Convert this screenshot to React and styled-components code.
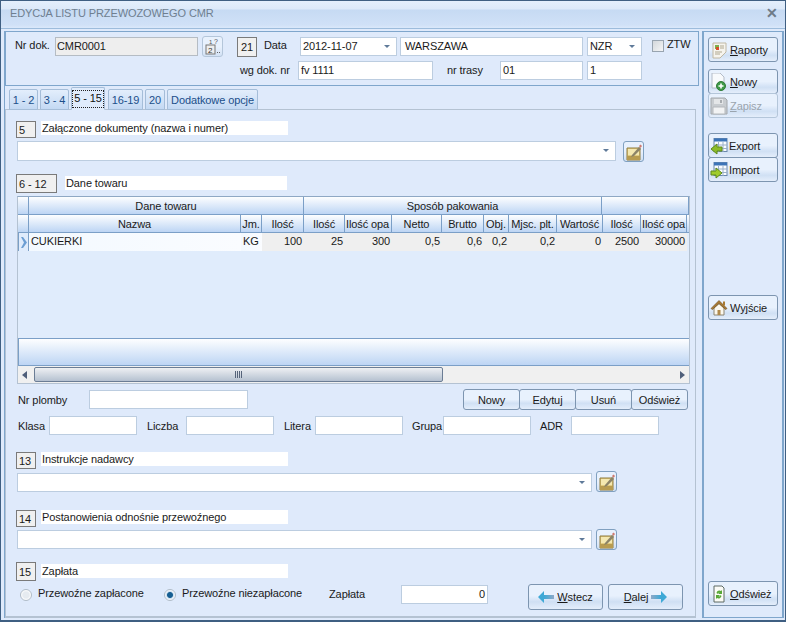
import React from 'react'
import styled, { createGlobalStyle } from 'styled-components'

const GlobalStyle = createGlobalStyle`
html, body {
  margin: 0;
  padding: 0;
  background: #e0ecfc;
}
* {
  box-sizing: border-box;
}
`

const Window = styled.div`
width: 786px;
height: 622px;
display: flex;
flex-direction: column;
overflow: hidden;
background: #dfeafb;
border: 1px solid #3f5f82;
border-bottom-width: 2px;
font-family: "Liberation Sans", Arial, sans-serif;
font-size: 11px;
letter-spacing: -0.1px;
color: #1a1a1a;
`

const TitleBar = styled.div`
height: 28px;
flex: none;
display: flex;
align-items: center;
justify-content: space-between;
padding: 0 7px 3px 9px;
background: linear-gradient(#e4effc 0, #dce9f9 8px, #c6daf3 9px, #d0e1f7 24px, #dbe8fa 100%);
border-bottom: 1px solid #9dbcdc;
color: #6f7f90;
font-size: 11px;
`

const Close = styled.span`
color: #6e7b88;
font-size: 14px;
font-weight: 700;
line-height: 1;
`

const Body = styled.div`
flex: 1;
display: flex;
padding: 2px 2px 2px 3px;
min-height: 0;
`

const Main = styled.div`
width: 695px;
flex: none;
display: flex;
flex-direction: column;
border-left: 1px solid #7fa6cc;
`

const Header = styled.div`
height: 55px;
flex: none;
border: 1px solid #7fa6cc;
padding: 5px 0 0 0;
display: flex;
flex-direction: column;
gap: 4px;
`

const HeaderRow = styled.div`
display: flex;
align-items: flex-start;
height: 20px;
`

const Label = styled.span`
flex: none;
width: ${p => (p.$w ? p.$w + 'px' : 'auto')};
margin-left: ${p => p.$ml || 0}px;
margin-top: ${p => p.$mt || 0}px;
white-space: nowrap;
`

const Input = styled.div`
flex: none;
width: ${p => p.$w}px;
height: ${p => p.$h || 19}px;
margin-left: ${p => p.$ml || 0}px;
background: ${p => (p.$grey ? '#eeeeee' : '#fff')};
border: 1px solid ${p => (p.$grey ? '#b5bcc4' : '#bccde0')};
padding: 1px 2px 0 ${p => p.$pad || 1}px;
line-height: 15px;
white-space: nowrap;
overflow: hidden;
display: flex;
justify-content: ${p => (p.$right ? 'flex-end' : 'space-between')};
align-items: flex-start;
`

const Caret = styled.span`
width: 0;
height: 0;
flex: none;
margin: 6px 4px 0 0;
border-left: 3px solid transparent;
border-right: 3px solid transparent;
border-top: 3px solid #5f7a99;
`

const Badge = styled.span`
flex: none;
display: flex;
align-items: center;
justify-content: ${p => (p.$center ? 'center' : 'flex-start')};
width: ${p => p.$w || 20}px;
height: ${p => p.$h || 17}px;
margin-left: ${p => p.$ml || 0}px;
margin-top: ${p => p.$mt || 0}px;
padding-left: ${p => (p.$center ? 0 : 2)}px;
background: #f0f0f0;
border: 1px solid #7a7a7a;
`

const IconTile = styled.span`
flex: none;
width: 21px;
height: 21px;
margin-left: ${p => p.$ml || 0}px;
margin-top: -1px;
border: 1px solid #b4c6da;
border-radius: 3px;
background: linear-gradient(#e8f1fd 50%, #d3e2f5 100%);
display: flex;
align-items: center;
justify-content: center;
`

const Check = styled.span`
flex: none;
width: 12px;
height: 12px;
margin: 3px 3px 0 10px;
border: 1px solid #98a4b0;
background: linear-gradient(135deg, #d4d8dc, #f4f5f6);
`

const Tabs = styled.div`
height: 24px;
flex: none;
display: flex;
align-items: flex-end;
padding-left: 4px;
gap: 2px;
margin-bottom: -1px;
position: relative;
z-index: 1;
`

const Tab = styled.span`
flex: none;
width: ${p => p.$w}px;
height: ${p => (p.$active ? 23 : 21)}px;
margin-right: ${p => (p.$active ? 1 : 0)}px;
display: flex;
align-items: center;
justify-content: center;
white-space: nowrap;
border: 1px solid #a5bdd8;
border-bottom-color: ${p => (p.$active ? '#e0ecfc' : '#a5bdd8')};
border-radius: 2px 2px 0 0;
color: ${p => (p.$active ? '#111' : '#1c4f8a')};
background: ${p => (p.$active ? '#e0ecfc' : 'linear-gradient(#e3eefc, #c4d9f3)')};
`

const TabFocus = styled.span`
padding: 1px 1px 2px;
border: 1px dotted #222;
line-height: 13px;
`

const Page = styled.div`
flex: 1;
width: 691px;
border: 1px solid #b4c2d2;
border-bottom-width: 2px;
padding: 11px 0 0 10px;
display: flex;
flex-direction: column;
`

const SectionHead = styled.div`
display: flex;
align-items: flex-start;
flex: none;
height: ${p => p.$h || 20}px;
margin-top: ${p => p.$mt || 0}px;
`

const SectionLabel = styled.span`
flex: none;
width: ${p => p.$w || 247}px;
height: 14px;
margin-left: ${p => p.$ml || 5}px;
padding-left: 1px;
line-height: 14px;
background: #fff;
`

const ComboRow = styled.div`
display: flex;
align-items: flex-start;
flex: none;
margin-left: 1px;
height: ${p => p.$h}px;
`

const EditButton = styled.span`
flex: none;
width: 21px;
height: 21px;
margin-left: ${p => p.$ml}px;
margin-top: ${p => p.$mt || 0}px;
border: 1px solid #80a0c0;
border-radius: 3px;
background: linear-gradient(#e8f1fd 50%, #cfdff3 100%);
display: flex;
align-items: center;
justify-content: center;
`

const Grid = styled.div`
width: 673px;
height: 188px;
flex: none;
margin-left: 1px;
border: 1px solid #b4c2d2;
border-top-color: #8fa8c4;
display: flex;
flex-direction: column;
overflow: hidden;
background: #e0ecfc;
`

const columns = '11px 212px 21px 42px 41px 47px 50px 42px 25px 48px 46px 38px 46px 2px'
const bandColumns = '11px 275px 298px 1fr'

const HeadBand = styled.div`
display: grid;
grid-template-columns: ${p => p.$cols};
height: 18px;
flex: none;
`

const HeadCell = styled.span`
display: flex;
align-items: center;
justify-content: center;
overflow: hidden;
white-space: nowrap;
padding: 0 1px;
background: linear-gradient(#fdfeff, #bdd5f4);
border-right: 1px solid #7b9fc7;
border-bottom: 1px solid #7b9fc7;
`

const ClipCell = styled(HeadCell)`
justify-content: flex-start;
`

const Row = styled.div`
display: grid;
grid-template-columns: ${columns};
height: 18px;
flex: none;
`

const Cell = styled.span`
line-height: 17px;
padding: 0 2px;
white-space: nowrap;
overflow: hidden;
text-align: ${p => (p.$right ? 'right' : 'left')};
background: ${p => (p.$grey ? '#efefef' : 'linear-gradient(90deg, #f3f9ff, #fafcff)')};
`

const Marker = styled.span`
display: flex;
align-items: center;
justify-content: center;
background: #e0ecfc;
border-right: 1px solid #7b9fc7;
border-left: 1px solid #7b9fc7;
`

const Spacer = styled.div`
flex: 1;
`

const FootBand = styled.div`
height: 28px;
flex: none;
background: linear-gradient(#fdfeff, #bdd5f4);
border: 1px solid #7b9fc7;
border-width: 1px 0 1px 1px;
`

const ScrollBar = styled.div`
height: 17px;
flex: none;
display: flex;
align-items: center;
background: #f0f0f0;
padding: 0 4px;
`

const ScrollArrow = styled.span`
flex: none;
width: 0;
height: 0;
border-top: 4px solid transparent;
border-bottom: 4px solid transparent;
${p => (p.$right ? 'border-left: 5px solid #4f5f7a; margin-left: auto;' : 'border-right: 5px solid #4f5f7a;')}
`

const ScrollThumb = styled.span`
flex: none;
width: 409px;
height: 15px;
margin-left: 7px;
border: 1px solid #6b7d95;
border-radius: 2px;
background: linear-gradient(#eef0f3, #b5c1d0);
display: flex;
align-items: center;
justify-content: center;
`

const ScrollGrip = styled.span`
width: 7px;
height: 7px;
background: repeating-linear-gradient(90deg, #56647a 0 1px, transparent 1px 2px);
`

const FormRow = styled.div`
display: flex;
align-items: ${p => (p.$top ? 'flex-start' : 'center')};
height: ${p => p.$h}px;
flex: none;
margin-left: 1px;
`

const SegmentGroup = styled.div`
display: flex;
margin-left: auto;
margin-right: 7px;
`

const Segment = styled.span`
width: 57px;
height: 21px;
margin-left: -1px;
display: flex;
align-items: center;
justify-content: center;
border: 1px solid #7d95b0;
border-radius: 3px;
background: linear-gradient(#e8f1fd 50%, #d0e0f4 70%, #e4eefb 100%);
`

const Radio = styled.span`
flex: none;
width: 12px;
height: 12px;
margin-left: ${p => p.$ml || 0}px;
margin-top: 4px;
margin-right: 6px;
border-radius: 50%;
border: 1px solid #b0bcc8;
background: ${p => (p.$on
    ? 'radial-gradient(circle, #175f92 0 2.5px, #cfe0f0 3.5px, #fff 5px)'
    : 'radial-gradient(circle, #e6ebf0 0 3px, #fff 5px)')};
`

const NavButton = styled.span`
flex: none;
width: 75px;
height: 26px;
margin-left: ${p => p.$ml || 0}px;
margin-top: -1px;
display: flex;
align-items: center;
justify-content: center;
gap: 3px;
border: 1px solid #7d95b0;
border-radius: 3px;
background: linear-gradient(#e8f1fd 45%, #cfdff3 70%, #e4eefb 100%);
`

const Sidebar = styled.div`
width: 82px;
flex: none;
margin-left: 3px;
border: 2px solid #7fa6cc;
border-bottom-width: 1px;
border-top-width: 1px;
padding: 5px 0 0 4px;
display: flex;
flex-direction: column;
`

const SideButton = styled.span`
flex: none;
width: 70px;
height: 25px;
margin-top: ${p => p.$mt || 0}px;
margin-bottom: -1px;
padding-left: 1px;
display: grid;
grid-template-columns: ${p => p.$slot || 20}px auto;
align-items: center;
border: 1px solid ${p => (p.$disabled ? '#b4c6da' : '#7d95b0')};
border-radius: 3px;
color: ${p => (p.$disabled ? '#9aa4ae' : '#1a1a1a')};
background: linear-gradient(#e8f1fd 50%, #d0e0f4 75%, #e4eefb 100%);
`

const Key = styled.span`
text-decoration: underline;
`

const NumberIcon = () => (
  <svg width="17" height="17" viewBox="0 0 17 17">
    <rect x="2" y="7" width="9" height="9" fill="#eee" stroke="#777" />
    <text x="4" y="14.5" fontSize="8" fontFamily="Liberation Sans" fill="#333">2</text>
    <text x="5" y="6" fontSize="6" fontFamily="Liberation Sans" fill="#555">1</text>
    <text x="10" y="6" fontSize="7" fontFamily="Liberation Sans" fill="#555">?</text>
    <rect x="13" y="14" width="1" height="1" fill="#666" />
    <rect x="15" y="14" width="1" height="1" fill="#666" />
  </svg>
)

const PenIcon = () => (
  <svg width="18" height="18" viewBox="0 0 18 18">
    <path d="M2 5h13v12H2z" fill="#e2cc80" stroke="#8f7a3c" />
    <path d="M3 6h11v6H3z" fill="#f4e8b0" />
    <path d="M2 13h13v4H2z" fill="#b89c50" />
    <path d="M7 12l7-8 2 2-7 7-3 1z" fill="#8c8468" />
    <path d="M14 3l1.500-1.500L17 3l-1.500 2z" fill="#cf7a70" />
  </svg>
)

const ReportIcon = () => (
  <svg width="18" height="18" viewBox="0 0 18 18">
    <path d="M3 2h13v9l-6 6H3z" fill="#f6f4ee" stroke="#c0b8a4" />
    <path d="M5 4h4v4H5z" fill="#7cb04c" />
    <path d="M6 6h3v3H6z" fill="#d8502c" />
    <path d="M10 5h4M10 7h4M5 11h7M5 13h5" stroke="#b0a890" />
  </svg>
)

const NewIcon = () => (
  <svg width="18" height="18" viewBox="0 0 18 18">
    <path d="M2 0h8l4 4v11H2z" fill="#f8fafc" stroke="#b4bcc8" />
    <circle cx="11" cy="13" r="4.500" fill="#3f9a48" stroke="#2f7a38" />
    <path d="M11 10.500v5M8.500 13h5" stroke="#fff" strokeWidth="1.600" />
  </svg>
)

const SaveIcon = () => (
  <svg width="18" height="18" viewBox="0 0 18 18">
    <path d="M1 1h14l2 2v14H1z" fill="#c8ccd0" stroke="#a4a8ac" />
    <path d="M4 2h9v5H4z" fill="#e4e6e8" />
    <path d="M10 3h2v3h-2z" fill="#a8acb0" />
    <path d="M3 10h12v7H3z" fill="#f2f3f4" stroke="#b4b8bc" />
  </svg>
)

const TableIcon = ({ right }) => (
  <svg width="18" height="18" viewBox="0 0 18 18">
    <rect x="4" y="1.500" width="13" height="13" fill="#fafcff" stroke="#6a88ac" />
    <rect x="4" y="1.500" width="13" height="3" fill="#3c74b8" />
    <path d="M8.500 5v10M13 5v10M4 8h13M4 11.500h13" stroke="#9ab0c8" />
    {right
      ? <path d="M1 10h5V7l6 5-6 5v-3H1z" fill="#a0cc2c" stroke="#5f8a1c" />
      : <path d="M12 10H7V7l-6 5 6 5v-3h5z" fill="#8cbc28" stroke="#5f8a1c" />}
  </svg>
)

const HouseIcon = () => (
  <svg width="18" height="18" viewBox="0 0 18 18">
    <path d="M4 9l5-4.500L14 9v7H4z" fill="#fbf8ee" stroke="#8c8470" />
    <path d="M7.500 11h3v5h-3z" fill="#b08a4c" />
    <path d="M1 9.500l8-8 8 8-1.500 1L9 4.500 2.500 10.500z" fill="#a87a34" stroke="#6c4c1c" strokeWidth=".6" />
    <path d="M13 2.500h2v4h-2z" fill="#a87a34" />
  </svg>
)

const RefreshIcon = () => (
  <svg width="18" height="18" viewBox="0 0 18 18">
    <path d="M4 1h8l2 2v14H4z" fill="#fbfbf6" stroke="#5f6a64" />
    <path d="M6.500 8a3 3 0 0 1 4.500-2l1-1v4H8l1.500-1.500A2 2 0 0 0 7.500 9z" fill="#58a838" />
    <path d="M11.500 11a3 3 0 0 1-4.500 2l-1 1v-4h4l-1.500 1.500A2 2 0 0 0 10.500 10z" fill="#58a838" />
  </svg>
)

const ArrowIcon = ({ right }) => (
  <svg width="16" height="12" viewBox="0 0 16 12">
    <defs>
      <linearGradient id={right ? 'arrowR' : 'arrowL'} x1={right ? '1' : '0'} x2={right ? '0' : '1'} y1="0" y2="0">
        <stop offset="0.4" stopColor="#3fa9d6" />
        <stop offset="1" stopColor="#8fa9c8" />
      </linearGradient>
    </defs>
    {right
      ? <path d="M0 4h10V0l6 6-6 6V8H0z" fill="url(#arrowR)" />
      : <path d="M16 4H6V0L0 6l6 6V8h10z" fill="url(#arrowL)" />}
  </svg>
)

const RowArrow = () => (
  <svg width="7" height="11" viewBox="0 0 7 11">
    <path d="M1 0h2l4 5.500L3 11H1l3-5.500z" fill="#6d9fd4" />
  </svg>
)

const App = () => {
  return (
    <Window>
      <GlobalStyle />
      <TitleBar>
        <span>EDYCJA LISTU PRZEWOZOWEGO CMR</span>
        <Close>✕</Close>
      </TitleBar>
      <Body>
        <Main>
          <Header>
            <HeaderRow>
              <Label $ml={9} $w={40} $mt={2}>Nr dok.</Label>
              <Input $grey $w={143}>CMR0001</Input>
              <IconTile $ml={4}><NumberIcon /></IconTile>
              <Badge $center $ml={14} $h={20}>21</Badge>
              <Label $ml={7} $w={36} $mt={2}>Data</Label>
              <Input $w={97} $pad={2}>2012-11-07<Caret /></Input>
              <Input $ml={3} $w={183} $pad={4}>WARSZAWA</Input>
              <Input $ml={4} $w={55} $pad={2}>NZR<Caret /></Input>
              <Check />
              <Label $mt={1}>ZTW</Label>
            </HeaderRow>
            <HeaderRow>
              <Label $ml={234} $w={58} $mt={3}>wg dok. nr</Label>
              <Input $w={135} $pad={2}>fv 1111</Input>
              <Label $ml={14} $w={53} $mt={3}>nr trasy</Label>
              <Input $w={83} $pad={2}>01</Input>
              <Input $ml={4} $w={55} $pad={2}>1</Input>
            </HeaderRow>
          </Header>
          <Tabs>
            <Tab $w={29}>1 - 2</Tab>
            <Tab $w={29}>3 - 4</Tab>
            <Tab $w={34} $active><TabFocus>5 - 15</TabFocus></Tab>
            <Tab $w={35}>16-19</Tab>
            <Tab $w={20}>20</Tab>
            <Tab $w={91}>Dodatkowe opcje</Tab>
          </Tabs>
          <Page>
            <SectionHead>
              <Badge>5</Badge>
              <SectionLabel>Załączone dokumenty (nazwa i numer)</SectionLabel>
            </SectionHead>
            <ComboRow $h={35}>
              <Input $w={599} $h={20}><span /><Caret /></Input>
              <EditButton $ml={7}><PenIcon /></EditButton>
            </ComboRow>
            <SectionHead>
              <Badge $w={41} $h={19} $mt={-2}>6 - 12</Badge>
              <SectionLabel $ml={8} $w={222}>Dane towaru</SectionLabel>
            </SectionHead>
            <Grid>
              <HeadBand $cols={bandColumns}>
                <HeadCell />
                <HeadCell>Dane towaru</HeadCell>
                <HeadCell>Sposób pakowania</HeadCell>
                <HeadCell />
              </HeadBand>
              <HeadBand $cols={columns}>
                <HeadCell />
                <HeadCell>Nazwa</HeadCell>
                <HeadCell>Jm.</HeadCell>
                <HeadCell>Ilość</HeadCell>
                <HeadCell>Ilość</HeadCell>
                <ClipCell>Ilość opa</ClipCell>
                <HeadCell>Netto</HeadCell>
                <HeadCell>Brutto</HeadCell>
                <HeadCell>Obj.</HeadCell>
                <HeadCell>Mjsc. plt.</HeadCell>
                <HeadCell>Wartość</HeadCell>
                <HeadCell>Ilość</HeadCell>
                <ClipCell>Ilość opa</ClipCell>
                <HeadCell />
              </HeadBand>
              <Row>
                <Marker><RowArrow /></Marker>
                <Cell>CUKIERKI</Cell>
                <Cell>KG</Cell>
                <Cell $grey $right>100</Cell>
                <Cell $grey $right>25</Cell>
                <Cell $grey $right>300</Cell>
                <Cell $grey $right>0,5</Cell>
                <Cell $grey $right>0,6</Cell>
                <Cell $grey $right>0,2</Cell>
                <Cell $grey $right>0,2</Cell>
                <Cell $grey $right>0</Cell>
                <Cell $grey $right>2500</Cell>
                <Cell $grey $right>30000</Cell>
              </Row>
              <Spacer />
              <FootBand />
              <ScrollBar>
                <ScrollArrow />
                <ScrollThumb><ScrollGrip /></ScrollThumb>
                <ScrollArrow $right />
              </ScrollBar>
            </Grid>
            <FormRow $h={31}>
              <Label $ml={1} $w={71}>Nr plomby</Label>
              <Input $w={159} />
              <SegmentGroup>
                <Segment>Nowy</Segment>
                <Segment>Edytuj</Segment>
                <Segment>Usuń</Segment>
                <Segment>Odśwież</Segment>
              </SegmentGroup>
            </FormRow>
            <FormRow $h={21}>
              <Label $ml={1} $w={31}>Klasa</Label>
              <Input $w={88} />
              <Label $ml={10} $w={39}>Liczba</Label>
              <Input $w={88} />
              <Label $ml={10} $w={31}>Litera</Label>
              <Input $w={88} />
              <Label $ml={9} $w={31}>Grupa</Label>
              <Input $w={88} />
              <Label $ml={9} $w={31}>ADR</Label>
              <Input $w={88} />
            </FormRow>
            <SectionHead $h={21} $mt={16}>
              <Badge>13</Badge>
              <SectionLabel>Instrukcje nadawcy</SectionLabel>
            </SectionHead>
            <ComboRow $h={37}>
              <Input $w={575}><span /><Caret /></Input>
              <EditButton $ml={4} $mt={-2}><PenIcon /></EditButton>
            </ComboRow>
            <SectionHead>
              <Badge>14</Badge>
              <SectionLabel>Postanowienia odnośnie przewoźnego</SectionLabel>
            </SectionHead>
            <ComboRow $h={34}>
              <Input $w={575}><span /><Caret /></Input>
              <EditButton $ml={4} $mt={-1}><PenIcon /></EditButton>
            </ComboRow>
            <SectionHead $h={21}>
              <Badge $h={19} $mt={-2}>15</Badge>
              <SectionLabel>Zapłata</SectionLabel>
            </SectionHead>
            <FormRow $h={25} $top>
              <Radio $ml={3} />
              <Label $w={106} $mt={2}>Przewoźne zapłacone</Label>
              <Radio $on $ml={20} />
              <Label $w={120} $mt={2}>Przewoźne niezapłacone</Label>
              <Label $ml={27} $w={72} $mt={3}>Zapłata</Label>
              <Input $right $w={87}>0</Input>
              <NavButton $ml={40}><ArrowIcon /><span><Key>W</Key>stecz</span></NavButton>
              <NavButton $ml={5}><span><Key>D</Key>alej</span><ArrowIcon right /></NavButton>
            </FormRow>
          </Page>
        </Main>
        <Sidebar>
          <SideButton><ReportIcon /><span><Key>R</Key>aporty</span></SideButton>
          <SideButton $mt={8}><NewIcon /><span><Key>N</Key>owy</span></SideButton>
          <SideButton $disabled><SaveIcon /><span><Key>Z</Key>apisz</span></SideButton>
          <SideButton $mt={16} $slot={19}><TableIcon /><span>Export</span></SideButton>
          <SideButton $slot={19}><TableIcon right /><span>Import</span></SideButton>
          <SideButton $mt={114}><HouseIcon /><span>Wyjście</span></SideButton>
          <SideButton $mt={262}><RefreshIcon /><span><Key>O</Key>dśwież</span></SideButton>
        </Sidebar>
      </Body>
    </Window>
  )
}

export default App
